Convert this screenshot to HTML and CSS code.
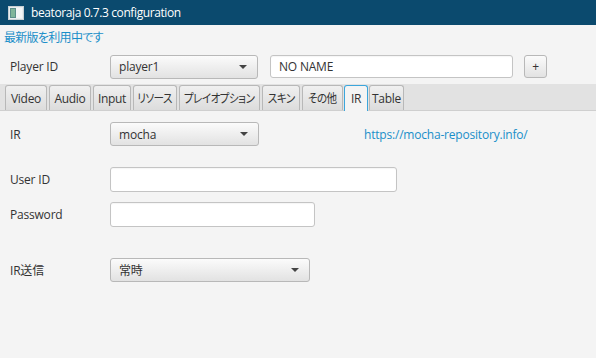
FILE: index.html
```html
<!DOCTYPE html>
<html>
<head>
<meta charset="utf-8">
<link rel="stylesheet" href="styles.css">
</head>
<body>
<div class="window">
  <div class="titlebar">
    <svg class="appicon" width="16" height="14" viewBox="0 0 16 14">
      <rect x="0.5" y="0.5" width="15" height="13" fill="#e8eef0" stroke="#c8d0d4"/>
      <rect x="2" y="2" width="6" height="10" fill="#5b8f8a"/>
      <rect x="3" y="3" width="4" height="8" fill="#7fb59a"/>
      <rect x="8" y="2" width="6" height="10" fill="#f4f6f7"/>
    </svg>
    <span class="title">beatoraja 0.7.3 configuration</span>
  </div>
  <div class="update">最新版を利用中です</div>
  <div class="player-row">
    <span class="label">Player ID</span>
    <div class="combo combo-player"><span>player1</span><i class="arrow"></i></div>
    <div class="field field-name">NO NAME</div>
    <div class="btn-plus">+</div>
  </div>
  <div class="tabstrip">
    <div class="tab t-video">Video</div>
    <div class="tab t-audio">Audio</div>
    <div class="tab t-input">Input</div>
    <div class="tab t-res"><span class="jpt">リソース</span></div>
    <div class="tab t-play"><span class="jpt">プレイオプション</span></div>
    <div class="tab t-skin"><span class="jpt">スキン</span></div>
    <div class="tab t-other"><span class="jpt">その他</span></div>
    <div class="tab t-ir selected">IR</div>
    <div class="tab t-table">Table</div>
  </div>
  <div class="content">
    <div class="row row-ir">
      <span class="label">IR</span>
      <div class="combo combo-ir"><span>mocha</span><i class="arrow"></i></div>
      <span class="link">https://mocha-repository.info/</span>
    </div>
    <div class="row row-user">
      <span class="label">User ID</span>
      <div class="field field-user"></div>
    </div>
    <div class="row row-pass">
      <span class="label">Password</span>
      <div class="field field-pass"></div>
    </div>
    <div class="row row-send">
      <span class="label">IR送信</span>
      <div class="combo combo-send"><span>常時</span><i class="arrow"></i></div>
    </div>
  </div>
</div>
</body>
</html>
```
FILE: styles.css
```css
* { box-sizing: border-box; }
html, body { margin: 0; padding: 0; }
body {
  width: 596px; height: 358px; overflow: hidden;
  background: #f4f4f4;
  font-family: "Open Sans", "Noto Sans CJK JP", sans-serif;
  font-size: 12px;
  letter-spacing: -0.2px;
  color: #333;
  font-feature-settings: "palt";
}
.window { width: 596px; height: 358px; background: #f4f4f4; }
.titlebar {
  height: 25px; background: #0b4a6e;
  display: flex; align-items: center;
  padding-left: 8px;
}
.appicon { margin-right: 7px; }
.title {
  color: #fff; font-size: 12px; letter-spacing: -0.4px;
  font-family: "Open Sans", sans-serif;
}
.update {
  height: 24px; padding: 3px 0 0 4px;
  color: #1a8fc9; font-size: 12px;
  letter-spacing: -0.7px;
}
.player-row {
  display: flex; align-items: center;
  height: 35px; padding-left: 10px;
}
.player-row .label { width: 100px; }
.label { color: #333; }
.combo {
  height: 24px;
  border: 1px solid #b8b8b8; border-radius: 3px;
  background: linear-gradient(#fbfbfb, #e2e2e2);
  display: flex; align-items: center; justify-content: space-between;
  padding: 0 10px 0 8px;
  color: #333;
}
.arrow {
  width: 0; height: 0;
  border-left: 4px solid transparent; border-right: 4px solid transparent;
  border-top: 4px solid #444;
}
.combo-player { width: 148px; }
.field {
  height: 23px; background: #fff;
  border: 1px solid #c4c4c4; border-radius: 3px;
  box-shadow: inset 0 1px 1px rgba(0,0,0,0.04);
  display: flex; align-items: center; padding-left: 8px;
  color: #333;
}
.field-name { width: 243px; margin-left: 12px; }
.btn-plus {
  width: 23px; height: 23px; margin-left: 11px;
  border: 1px solid #b8b8b8; border-radius: 3px;
  background: linear-gradient(#fbfbfb, #e2e2e2);
  display: flex; align-items: center; justify-content: center;
  font-size: 12px; color: #333;
}
.tabstrip {
  height: 27px; background: #e2e2e2;
  display: flex; align-items: flex-end;
  padding-left: 5px; gap: 2px;
  border-bottom: 1px solid #cfcfcf;
}
.tab {
  height: 25px; padding: 0;
  border: 1px solid #b8b8b8; border-bottom: none;
  border-radius: 3px 3px 0 0;
  background: linear-gradient(#f0f0f0, #dcdcdc);
  display: flex; align-items: center; justify-content: center;
  color: #333;
  white-space: nowrap;
  letter-spacing: -0.3px;
}
.jpt {
  display: inline-block;
  letter-spacing: -0.6px;
  transform: scaleX(0.88);
}
.t-video { width: 42px; }
.t-audio { width: 42px; }
.t-input { width: 38px; }
.t-res { width: 44px; }
.t-play { width: 81px; }
.t-skin { width: 38px; }
.t-other { width: 41px; }
.t-ir { width: 24px; margin: 0 -1px; }
.t-table { width: 35px; }
.tab.selected {
  background: #f4f4f4;
  border-color: #3ba6dc;
  height: 26px; margin-bottom: -1px;
  position: relative;
}
.content { padding-left: 10px; }
.row { display: flex; align-items: center; }
.row .label { width: 100px; }
.row-ir { margin-top: 11px; }
.combo-ir { width: 149px; height: 24px; }
.link { color: #1a8fc9; margin-left: 105px; }
.row-user { margin-top: 21px; }
.field-user { width: 287px; height: 25px; }
.row-pass { margin-top: 10px; }
.field-pass { width: 205px; height: 25px; }
.row-send { margin-top: 31px; }
.combo-send { width: 200px; height: 24px; }
```
